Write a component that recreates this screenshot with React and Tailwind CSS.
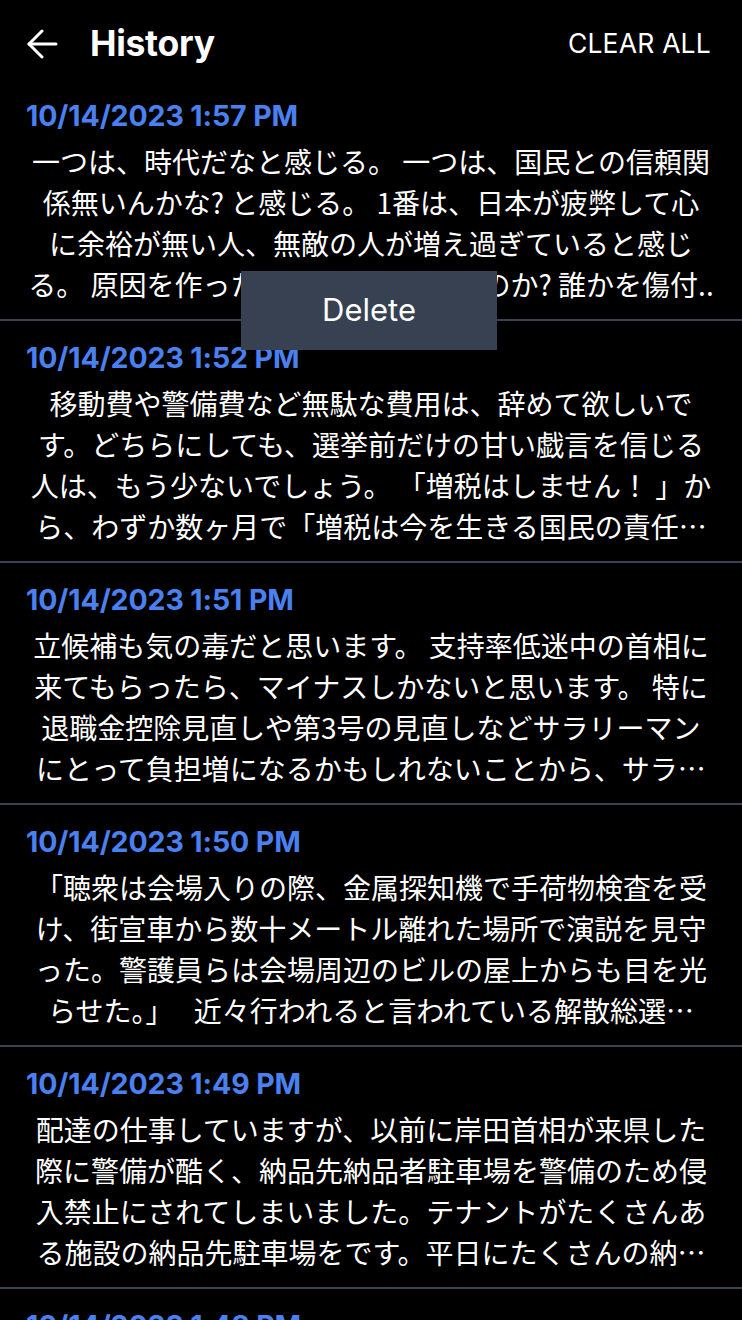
const items = [
  {
    date: '10/14/2023 1:57 PM',
    lines: [
      '一つは、時代だなと感じる。 一つは、国民との信頼関',
      '係無いんかな? と感じる。 1番は、日本が疲弊して心',
      'に余裕が無い人、無敵の人が増え過ぎていると感じ',
      'る。 原因を作ったのは政治ではないのか? 誰かを傷付..',
    ],
  },
  {
    date: '10/14/2023 1:52 PM',
    lines: [
      '移動費や警備費など無駄な費用は、辞めて欲しいで',
      'す。どちらにしても、選挙前だけの甘い戯言を信じる',
      '人は、もう少ないでしょう。 「増税はしません！ 」か',
      'ら、わずか数ヶ月で「増税は今を生きる国民の責任…',
    ],
  },
  {
    date: '10/14/2023 1:51 PM',
    lines: [
      '立候補も気の毒だと思います。 支持率低迷中の首相に',
      '来てもらったら、マイナスしかないと思います。 特に',
      '退職金控除見直しや第3号の見直しなどサラリーマン',
      'にとって負担増になるかもしれないことから、サラ…',
    ],
  },
  {
    date: '10/14/2023 1:50 PM',
    lines: [
      '「聴衆は会場入りの際、金属探知機で手荷物検査を受',
      'け、街宣車から数十メートル離れた場所で演説を見守',
      'った。警護員らは会場周辺のビルの屋上からも目を光',
      'らせた。」　 近々行われると言われている解散総選…',
    ],
  },
  {
    date: '10/14/2023 1:49 PM',
    lines: [
      '配達の仕事していますが、以前に岸田首相が来県した',
      '際に警備が酷く、納品先納品者駐車場を警備のため侵',
      '入禁止にされてしまいました。テナントがたくさんあ',
      'る施設の納品先駐車場をです。平日にたくさんの納…',
    ],
  },
  {
    date: '10/14/2023 1:48 PM',
    lines: [],
  },
];

function BackArrow() {
  return (
    <svg width="32" height="30" viewBox="0 0 32 30" fill="none" stroke="white" strokeWidth="3" strokeLinecap="round" strokeLinejoin="round">
      <path d="M30 15H3" />
      <path d="M16 2L3 15l13 13" />
    </svg>
  );
}

export default function App() {
  return (
    <div
      className="relative h-[1320px] w-full overflow-hidden bg-black text-white"
      style={{ fontFamily: 'Inter, "Noto Sans CJK JP", sans-serif' }}
    >
      {/* header */}
      <div className="flex h-[79px] items-center justify-between pl-[26px] pr-[31px] pt-[8px]">
        <div className="flex items-center gap-[32px]">
          <BackArrow />
          <h1 className="text-[35.5px] font-bold tracking-[-0.3px]">History</h1>
        </div>
        <button className="text-[26.5px] font-normal tracking-[0.2px]">CLEAR ALL</button>
      </div>

      {/* list */}
      <div>
        {items.map((it) => (
          <div key={it.date} className="border-b-2 border-[#394253] px-[26px] pb-[14px] pt-[21px]">
            <p className="text-[28.5px] font-bold leading-[32px] text-[#4a80f0] tracking-[-0.1px]">{it.date}</p>
            <div className="mt-[9px] text-center text-[28px] leading-[41px]" style={{ fontFamily: '"Noto Sans CJK JP", sans-serif' }}>
              {it.lines.map((l, i) => (
                <span key={i} className="block h-[41px] whitespace-nowrap">{l}</span>
              ))}
            </div>
          </div>
        ))}
      </div>

      {/* context menu */}
      <div className="absolute left-[241px] top-[271px] flex h-[79px] w-[256px] items-center justify-center bg-[#374151]">
        <span className="text-[31px]">Delete</span>
      </div>
    </div>
  );
}
